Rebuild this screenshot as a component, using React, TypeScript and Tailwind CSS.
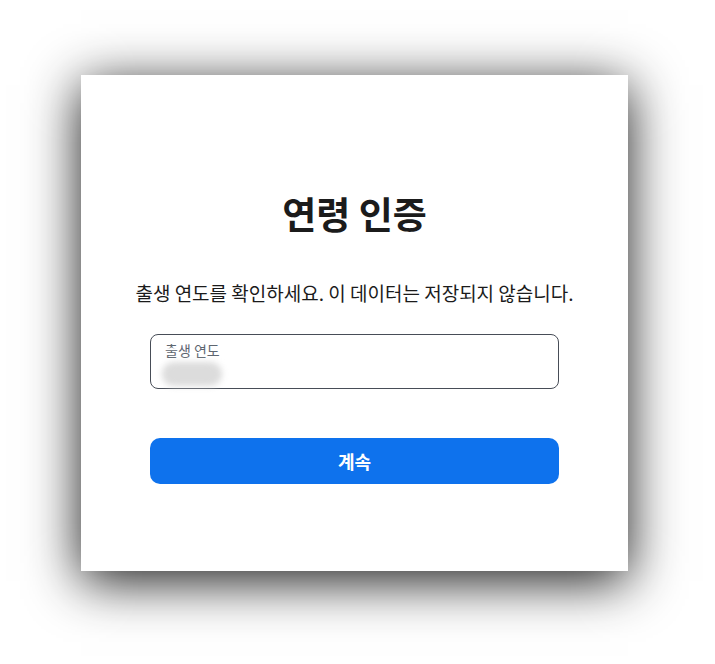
import React from 'react';

const App: React.FC = () => {
  return (
    <div
      className="min-h-[664px] w-full bg-white pt-[75px] pl-[81px]"
      style={{ fontFamily: '"Noto Sans CJK KR", "Noto Sans", sans-serif' }}
    >
      {/* Age verification card */}
      <div className="w-[547px] h-[496px] bg-white shadow-[0_10px_50px_rgba(0,0,0,0.9)] flex flex-col items-center px-[69px] pt-[112px]">
        <h1 className="text-[37px] leading-[52px] font-bold text-[#1b1b1b]">연령 인증</h1>
        <p className="mt-[40px] text-[19px] leading-[28px] text-[#1b1b1b] whitespace-nowrap">
          출생 연도를 확인하세요. 이 데이터는 저장되지 않습니다.
        </p>

        <div className="mt-[27px] w-full h-[55px] rounded-[8px] border border-[#474d57] px-[14px] pt-[6px]">
          <div className="text-[14px] leading-[18px] text-[#5e6670]">출생 연도</div>
          <div className="mt-[3px] ml-[-3px] h-[24px] w-[60px] rounded-full bg-[#dcdcdc] blur-[3px]" />
        </div>

        <button className="mt-[49px] w-full h-[46px] rounded-[10px] bg-[#0e72ed] text-white text-[18px] font-bold">
          계속
        </button>
      </div>
    </div>
  );
};

export default App;
